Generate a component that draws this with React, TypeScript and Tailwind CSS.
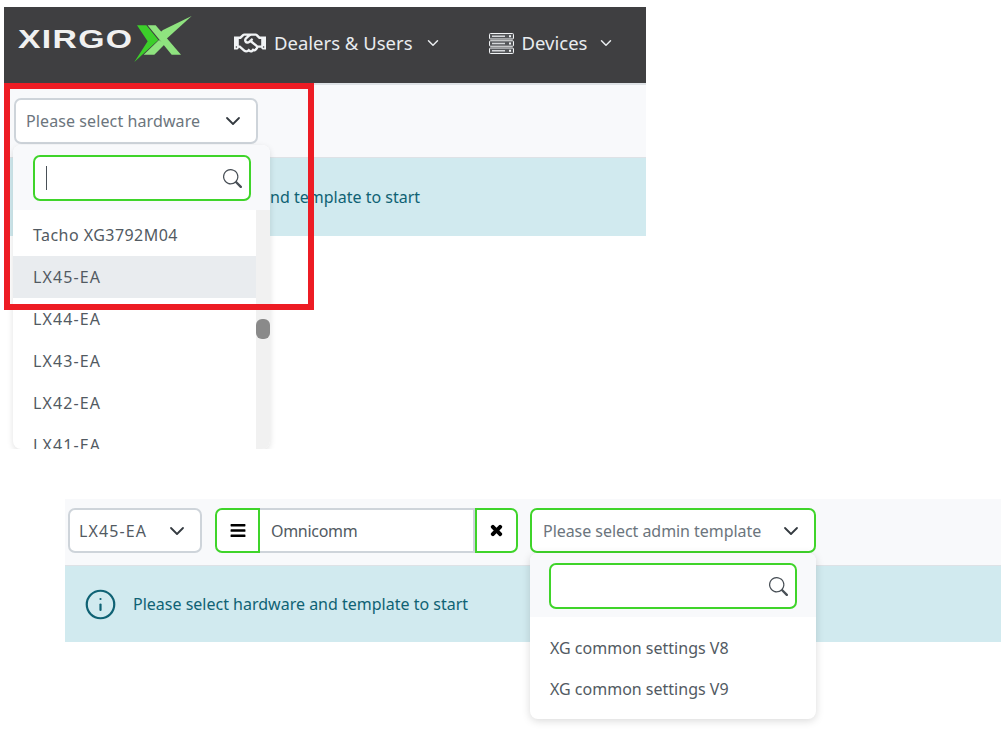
import React from 'react';
import { ChevronDown, Info } from 'lucide-react';
import { FaBars, FaRegHandshake, FaTimes } from 'react-icons/fa';
import { BsSearch } from 'react-icons/bs';

const font = "font-['Noto_Sans',sans-serif]";

const XMark = () => (
  <svg width="72" height="54" viewBox="0 0 216 162" className="shrink-0">
    <polygon points="36,40 64,40 100,84 28,150 68,88" fill="#3ccf2a" />
    <polygon points="68,40 92,40 168,128 140,128" fill="#8fe37f" />
    <polygon points="200,12 114,54 96,70 114,90" fill="#8fe37f" />
    <polygon points="56,128 88,128 120,96 102,84" fill="#8fe37f" />
  </svg>
);

const ServerIcon = () => (
  <svg width="25" height="21" viewBox="0 0 25 21" className="shrink-0">
    <rect x="0.5" y="0.5" width="24" height="5.5" rx="1" fill="#55575a" stroke="#f1f3f5" />
    <rect x="0.5" y="7.75" width="24" height="5.5" rx="1" fill="#55575a" stroke="#f1f3f5" />
    <rect x="0.5" y="15" width="24" height="5.5" rx="1" fill="#55575a" stroke="#f1f3f5" />
    <rect x="3" y="2.5" width="13" height="1.5" fill="#d5d7da" />
    <rect x="3" y="9.75" width="13" height="1.5" fill="#d5d7da" />
    <rect x="3" y="17" width="13" height="1.5" fill="#d5d7da" />
    <rect x="20" y="2.25" width="2" height="2" fill="#f1f3f5" />
    <rect x="20" y="9.5" width="2" height="2" fill="#f1f3f5" />
    <rect x="20" y="16.75" width="2" height="2" fill="#f1f3f5" />
  </svg>
);

const SearchBox = ({ caret, className }: { caret?: boolean; className: string }) => (
  <div className={`flex h-[46px] items-center justify-between rounded-[7px] border-2 border-[#3fd42a] bg-white pl-[11px] pr-[7px] ${className}`}>
    {caret ? <div className="h-[24px] w-px bg-[#495057]" /> : <span />}
    <BsSearch className="h-[19px] w-[19px] text-[#495057]" />
  </div>
);

const Option = ({ label, active, className = 'h-[42px]' }: { label: string; active?: boolean; className?: string }) => (
  <div className={`flex shrink-0 items-center pl-[20px] text-[16px] text-[#525a62] ${className} ${active ? 'bg-[#e9ecef]' : ''}`}>
    {label}
  </div>
);

const Alert = ({ children, className }: { children: React.ReactNode; className: string }) => (
  <div className={`border-t border-[#dee2e6] bg-[#d1eaef] ${className}`}>{children}</div>
);

export default function App() {
  return (
    <div className={`${font} min-h-[734px] w-[1005px] bg-white pl-[4px] pt-[7px]`}>
      {/* first capture: hardware dropdown open */}
      <div className="relative h-[442px] w-[642px] overflow-hidden">
        <div className="flex h-[76px] items-center bg-[#3f3f41] pb-[4px] pl-[14px] text-[18.5px] text-[#e9ecef]">
          <div className="flex w-[179px] items-center pb-[8px]">
            <span className="w-[107px] origin-left scale-x-[1.3] font-['Liberation_Sans',sans-serif] text-[26px] font-bold leading-none tracking-[1px] text-[#f1f1f1]">
              XIRGO
            </span>
            <XMark />
          </div>
          <FaRegHandshake className="ml-[37px] h-[32px] w-[32px] text-[#f1f3f5]" />
          <span className="ml-[8px]">Dealers &amp; Users</span>
          <ChevronDown className="ml-[11px] h-[18px] w-[18px]" />
          <div className="ml-[47px]"><ServerIcon /></div>
          <span className="ml-[8px]">Devices</span>
          <ChevronDown className="ml-[10px] h-[18px] w-[18px]" />
        </div>
        <div className="h-[2px] bg-[#dee2e6]" />
        <div className="flex h-[72px] items-center bg-[#f8f9fb] pl-[10px]">
          <div className="flex h-[46px] w-[244px] items-center justify-between rounded-[7px] border-2 border-[#ced4da] bg-white pl-[10px] pr-[11px] text-[16px] tracking-[0.1px] text-[#6c757d]">
            Please select hardware
            <ChevronDown className="h-[24px] w-[24px] text-[#343a40]" strokeWidth={1.8} />
          </div>
        </div>
        <Alert className="flex h-[79px] items-center pl-[81px] text-[16px] text-[#0f6274]">
          <span>Please select hardware and template to start</span>
        </Alert>

        <div className="absolute left-[9px] top-[138px] flex h-[304px] w-[257px] flex-col overflow-hidden rounded-[8px] bg-white shadow-[0_2px_6px_rgba(0,0,0,0.12)]">
          <div className="h-[65px] shrink-0 bg-[#f8f9fb] pl-[20px] pt-[10px]">
            <SearchBox caret className="w-[218px]" />
          </div>
          <div className="relative flex flex-1 flex-col pr-[14px] pt-[4px]">
            <Option label="Tacho XG3792M04" className="h-[42px] tracking-[0.45px]" />
            <Option label="LX45-EA" active className="h-[42px] tracking-[1.1px]" />
            <Option label="LX44-EA" className="h-[42px] tracking-[1.1px]" />
            <Option label="LX43-EA" className="h-[42px] tracking-[1.1px]" />
            <Option label="LX42-EA" className="h-[42px] tracking-[1.1px]" />
            <Option label="LX41-EA" className="h-[42px] tracking-[1.1px]" />
            <div className="absolute inset-y-0 right-0 w-[14px] bg-[#f1f1f1]">
              <div className="absolute top-[109px] h-[20px] w-[14px] rounded-[6px] bg-[#8a8a8a]" />
            </div>
          </div>
        </div>

        {/* red annotation frame */}
        <div className="absolute left-0 top-[76px] h-[227px] w-[310px] border-[6px] border-[#ed1c24]" />
      </div>

      {/* second capture: admin template dropdown open */}
      <div className="relative ml-[61px] mt-[50px] w-[936px]">
        <div className="flex h-[66px] items-start bg-[#f8f9fb] pl-[3px] pt-[9px] text-[16px] text-[#525a62]">
          <div className="flex h-[45px] w-[134px] items-center justify-between rounded-[7px] border-2 border-[#ced4da] bg-white pl-[9px] pr-[11px] tracking-[1.1px]">
            LX45-EA
            <ChevronDown className="h-[24px] w-[24px] text-[#343a40]" strokeWidth={1.8} />
          </div>
          <div className="ml-[13px] flex h-[45px]">
            <div className="flex w-[45px] items-center justify-center rounded-l-[7px] border-2 border-[#3fd42a] bg-white">
              <FaBars className="h-[17px] w-[16px] text-black" />
            </div>
            <div className="flex w-[215px] items-center border-y-2 border-r-2 border-[#ced4da] bg-white pl-[11px] tracking-[-0.3px]">
              Omnicomm
            </div>
            <div className="flex w-[43px] items-center justify-center rounded-r-[7px] border-2 border-[#3fd42a] bg-white">
              <FaTimes className="h-[15px] w-[15px] stroke-[40] text-black" />
            </div>
          </div>
          <div className="ml-[12px] flex h-[45px] w-[286px] items-center justify-between rounded-[7px] border-2 border-[#3fd42a] bg-white pl-[11px] pr-[11px] tracking-[-0.05px] text-[#6c757d]">
            Please select admin template
            <ChevronDown className="h-[24px] w-[24px] text-[#343a40]" strokeWidth={1.8} />
          </div>
        </div>
        <Alert className="flex h-[77px] items-center pl-[19px] text-[16px] text-[#0f6274]">
          <Info className="h-[33px] w-[33px]" strokeWidth={1.6} />
          <span className="ml-[16px]">Please select hardware and template to start</span>
        </Alert>

        <div className="absolute left-[465px] top-[54px] h-[166px] w-[286px] overflow-hidden rounded-[8px] bg-white shadow-[0_2px_8px_rgba(0,0,0,0.15)]">
          <div className="h-[64px] bg-[#f8f9fb] pl-[19px] pt-[10px]">
            <SearchBox className="w-[248px]" />
          </div>
          <div className="pt-[10px]">
            <Option label="XG common settings V8" className="h-[41px]" />
            <Option label="XG common settings V9" className="h-[41px]" />
          </div>
        </div>
      </div>
    </div>
  );
}
